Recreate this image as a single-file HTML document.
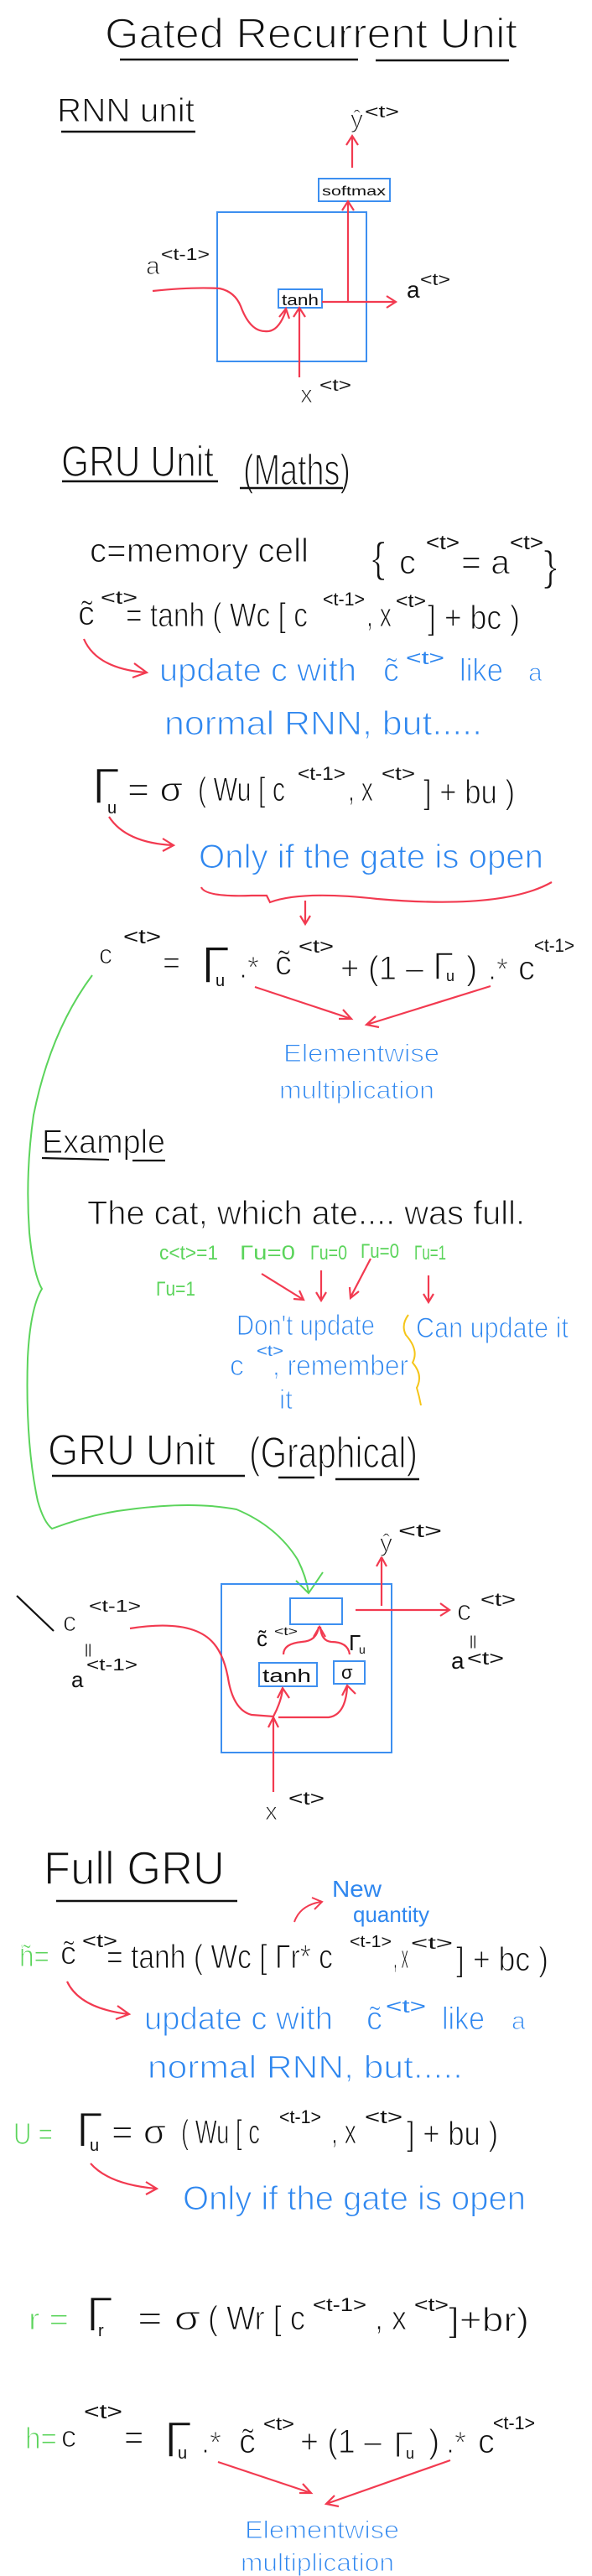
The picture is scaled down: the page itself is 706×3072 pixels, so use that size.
<!DOCTYPE html>
<html><head><meta charset="utf-8">
<style>
html,body{margin:0;padding:0;background:#fff;}
svg{display:block;}
text{font-family:"Liberation Sans",sans-serif;}
text[font-size="30"],text[font-size="32"],text[font-size="34"],text[font-size="36"],text[font-size="38"],text[font-size="40"]{stroke:#fff;stroke-width:1.1px;}
text[font-size="44"],text[font-size="46"],text[font-size="50"],text[font-size="52"],text[font-size="56"],text[font-size="58"],text[font-size="60"],text[font-size="62"]{stroke:#fff;stroke-width:1.6px;}
.k{fill:#111;}
.b{fill:#2f87ef;}
.g{fill:#5bd45b;}
</style></head>
<body>
<svg width="706" height="3072" viewBox="0 0 706 3072" xmlns="http://www.w3.org/2000/svg">
<rect width="706" height="3072" fill="#fff"/>

<text class="k" x="125" y="57" font-size="50" textLength="492" lengthAdjust="spacingAndGlyphs">Gated Recurrent Unit</text>
<g stroke="#111" stroke-width="2.5">
<line x1="143" y1="71" x2="427" y2="71"/><line x1="448" y1="72" x2="607" y2="72"/>
</g>

<text class="k" x="68" y="145" font-size="40" textLength="164" lengthAdjust="spacingAndGlyphs">RNN unit</text>
<line x1="73" y1="157" x2="233" y2="157" stroke="#111" stroke-width="2.5"/>

<g fill="none" stroke="#3d8ff0" stroke-width="2">
<rect x="259" y="253" width="178" height="178"/>
<rect x="380" y="213" width="85" height="27"/>
<rect x="332" y="345" width="52" height="22"/>
</g>
<text class="k" x="384" y="233" font-size="16" textLength="76" lengthAdjust="spacingAndGlyphs">softmax</text>
<text class="k" x="336" y="364" font-size="18" textLength="44" lengthAdjust="spacingAndGlyphs">tanh</text>
<g fill="none" stroke="#f23a50" stroke-width="2.2">
<path d="M182,347 Q230,342 262,344 Q280,348 287,365 Q298,395 316,395 Q332,397 341,370"/>
<path d="M333,378 L341,368 L345,380"/>
<path d="M357,450 L357,368 M350,378 L357,367 L364,378"/>
<path d="M384,360 L471,360 M461,353 L472,360 L461,367"/>
<path d="M415,360 L415,241 M408,251 L415,240 L422,251"/>
<path d="M420,200 L420,163 M413,173 L420,162 L427,173"/>
</g>
<text class="k" x="418" y="152" font-size="30">ŷ</text>
<text class="k" x="435" y="140" font-size="20" textLength="41" lengthAdjust="spacingAndGlyphs">&lt;t&gt;</text>
<text class="k" x="174" y="327" font-size="30">a</text>
<text class="k" x="192" y="310" font-size="20" textLength="58" lengthAdjust="spacingAndGlyphs">&lt;t-1&gt;</text>
<text class="k" x="485" y="355" font-size="28">a</text>
<text class="k" x="501" y="340" font-size="20" textLength="36" lengthAdjust="spacingAndGlyphs">&lt;t&gt;</text>
<text class="k" x="358" y="480" font-size="30">x</text>
<text class="k" x="381" y="466" font-size="20" textLength="38" lengthAdjust="spacingAndGlyphs">&lt;t&gt;</text>

<text class="k" x="73" y="568" font-size="52" textLength="182" lengthAdjust="spacingAndGlyphs">GRU Unit</text>
<text class="k" x="290" y="578" font-size="52" textLength="128" lengthAdjust="spacingAndGlyphs">(Maths)</text>
<g stroke="#111" stroke-width="2.5">
<line x1="74" y1="574" x2="260" y2="574"/><line x1="286" y1="582" x2="409" y2="582"/>
</g>

<text class="k" x="107" y="670" font-size="40" textLength="261" lengthAdjust="spacingAndGlyphs">c=memory cell</text>
<text class="k" x="443" y="682" font-size="50">{</text>
<text class="k" x="476" y="684" font-size="40">c</text>
<text class="k" x="508" y="655" font-size="24" textLength="40" lengthAdjust="spacingAndGlyphs">&lt;t&gt;</text>
<text class="k" x="550" y="684" font-size="40" textLength="58" lengthAdjust="spacingAndGlyphs">= a</text>
<text class="k" x="608" y="655" font-size="24" textLength="40" lengthAdjust="spacingAndGlyphs">&lt;t&gt;</text>
<text class="k" x="648" y="692" font-size="50">}</text>

<text class="k" x="93" y="745" font-size="40">c̃</text>
<text class="k" x="120" y="720" font-size="22" textLength="44" lengthAdjust="spacingAndGlyphs">&lt;t&gt;</text>
<text class="k" x="150" y="747" font-size="40" textLength="217" lengthAdjust="spacingAndGlyphs">= tanh ( Wc [ c</text>
<text class="k" x="385" y="722" font-size="22" textLength="50" lengthAdjust="spacingAndGlyphs">&lt;t-1&gt;</text>
<text class="k" x="437" y="747" font-size="40" textLength="30" lengthAdjust="spacingAndGlyphs">, x</text>
<text class="k" x="472" y="724" font-size="22" textLength="36" lengthAdjust="spacingAndGlyphs">&lt;t&gt;</text>
<text class="k" x="510" y="750" font-size="40" textLength="110" lengthAdjust="spacingAndGlyphs">] + bc )</text>

<g fill="none" stroke="#f23a50" stroke-width="2.2">
<path d="M100,762 Q115,797 173,802 M160,791 L175,802 L158,808"/>
</g>
<text class="b" x="190" y="812" font-size="38" textLength="235" lengthAdjust="spacingAndGlyphs">update c with</text>
<text class="b" x="457" y="812" font-size="38">c̃</text>
<text class="b" x="484" y="792" font-size="22" textLength="46" lengthAdjust="spacingAndGlyphs">&lt;t&gt;</text>
<text class="b" x="548" y="812" font-size="38" textLength="52" lengthAdjust="spacingAndGlyphs">like</text>
<text class="b" x="630" y="812" font-size="30">a</text>
<text class="b" x="196" y="876" font-size="40" textLength="379" lengthAdjust="spacingAndGlyphs">normal RNN, but.....</text>

<text class="k" x="110" y="958" font-size="60">Γ</text>
<text class="k" x="128" y="970" font-size="20">u</text>
<text class="k" x="152" y="955" font-size="40" textLength="66" lengthAdjust="spacingAndGlyphs">= σ</text>
<text class="k" x="236" y="955" font-size="40" textLength="104" lengthAdjust="spacingAndGlyphs">( Wu [ c</text>
<text class="k" x="355" y="930" font-size="22" textLength="57" lengthAdjust="spacingAndGlyphs">&lt;t-1&gt;</text>
<text class="k" x="415" y="955" font-size="40" textLength="30" lengthAdjust="spacingAndGlyphs">, x</text>
<text class="k" x="455" y="930" font-size="22" textLength="40" lengthAdjust="spacingAndGlyphs">&lt;t&gt;</text>
<text class="k" x="505" y="958" font-size="40" textLength="109" lengthAdjust="spacingAndGlyphs">] + bu )</text>

<g fill="none" stroke="#f23a50" stroke-width="2.2">
<path d="M130,974 Q150,1005 206,1008 M194,1000 L207,1008 L194,1015"/>
<path d="M240,1058 Q245,1070 300,1068 L318,1068 L322,1076 Q360,1062 450,1072 Q600,1085 658,1052"/>
<path d="M364,1074 L364,1101 M358,1092 L364,1102 L370,1092"/>
</g>
<text class="b" x="237" y="1035" font-size="40" textLength="411" lengthAdjust="spacingAndGlyphs">Only if the gate is open</text>

<text class="k" x="118" y="1149" font-size="32">c</text>
<text class="k" x="147" y="1125" font-size="24" textLength="45" lengthAdjust="spacingAndGlyphs">&lt;t&gt;</text>
<text class="k" x="194" y="1160" font-size="36">=</text>
<text class="k" x="240" y="1172" font-size="62">Γ</text>
<text class="k" x="257" y="1176" font-size="20">u</text>
<text class="k" x="285" y="1166" font-size="36">.*</text>
<text class="k" x="328" y="1162" font-size="40">c̃</text>
<text class="k" x="356" y="1136" font-size="22" textLength="42" lengthAdjust="spacingAndGlyphs">&lt;t&gt;</text>
<text class="k" x="406" y="1168" font-size="40" textLength="99" lengthAdjust="spacingAndGlyphs">+ (1 –</text>
<text class="k" x="516" y="1168" font-size="46">Γ</text>
<text class="k" x="532" y="1170" font-size="18">u</text>
<text class="k" x="556" y="1168" font-size="40">)</text>
<text class="k" x="582" y="1168" font-size="36">.*</text>
<text class="k" x="618" y="1168" font-size="40">c</text>
<text class="k" x="637" y="1135" font-size="22" textLength="48" lengthAdjust="spacingAndGlyphs">&lt;t-1&gt;</text>

<g fill="none" stroke="#f23a50" stroke-width="2.2">
<path d="M304,1177 L419,1215 M404,1215 L419,1215 L409,1204"/>
<path d="M585,1176 L437,1222 M448,1212 L437,1222 L452,1225"/>
</g>
<text class="b" x="338" y="1266" font-size="30" textLength="186" lengthAdjust="spacingAndGlyphs">Elementwise</text>
<text class="b" x="333" y="1310" font-size="30" textLength="185" lengthAdjust="spacingAndGlyphs">multiplication</text>

<text class="k" x="50" y="1375" font-size="40" textLength="147" lengthAdjust="spacingAndGlyphs">Example</text>
<g stroke="#111" stroke-width="2.2">
<line x1="50" y1="1381" x2="130" y2="1383"/><line x1="158" y1="1384" x2="197" y2="1384"/>
</g>
<text class="k" x="104" y="1460" font-size="40" textLength="522" lengthAdjust="spacingAndGlyphs">The cat, which ate.... was full.</text>

<text class="g" x="190" y="1502" font-size="24" textLength="70" lengthAdjust="spacingAndGlyphs">c&lt;t&gt;=1</text>
<text class="g" x="286" y="1502" font-size="24" textLength="66" lengthAdjust="spacingAndGlyphs">Γu=0</text>
<text class="g" x="370" y="1502" font-size="24" textLength="44" lengthAdjust="spacingAndGlyphs">Γu=0</text>
<text class="g" x="430" y="1500" font-size="24" textLength="46" lengthAdjust="spacingAndGlyphs">Γu=0</text>
<text class="g" x="494" y="1502" font-size="24" textLength="38" lengthAdjust="spacingAndGlyphs">Γu=1</text>
<text class="g" x="186" y="1545" font-size="24" textLength="47" lengthAdjust="spacingAndGlyphs">Γu=1</text>

<g fill="none" stroke="#f23a50" stroke-width="2.2">
<path d="M312,1519 L362,1550 M350,1549 L362,1550 L357,1539"/>
<path d="M383,1515 L383,1550 M377,1541 L383,1551 L389,1541"/>
<path d="M442,1501 L418,1547 M417,1535 L418,1548 L428,1540"/>
<path d="M511,1521 L511,1552 M505,1543 L511,1553 L517,1543"/>
</g>
<text class="b" x="282" y="1592" font-size="34" textLength="165" lengthAdjust="spacingAndGlyphs">Don't update</text>
<text class="b" x="274" y="1640" font-size="34">c</text>
<text class="b" x="306" y="1617" font-size="18" textLength="32" lengthAdjust="spacingAndGlyphs">&lt;t&gt;</text>
<text class="b" x="325" y="1640" font-size="34" textLength="162" lengthAdjust="spacingAndGlyphs">, remember</text>
<text class="b" x="333" y="1680" font-size="32">it</text>
<text class="b" x="496" y="1595" font-size="34" textLength="182" lengthAdjust="spacingAndGlyphs">Can update it</text>
<path d="M487,1568 Q478,1580 484,1592 Q500,1610 492,1625 Q505,1640 497,1655 Q500,1665 502,1676" fill="none" stroke="#f5c518" stroke-width="2"/>

<text class="k" x="57" y="1747" font-size="52" textLength="200" lengthAdjust="spacingAndGlyphs">GRU Unit</text>
<text class="k" x="297" y="1750" font-size="52" textLength="201" lengthAdjust="spacingAndGlyphs">(Graphical)</text>
<g stroke="#111" stroke-width="2.5">
<line x1="62" y1="1760" x2="292" y2="1760"/><line x1="332" y1="1762" x2="375" y2="1762"/><line x1="400" y1="1764" x2="500" y2="1764"/>
</g>

<path d="M110,1163 Q60,1230 40,1330 Q30,1400 35,1470 Q40,1520 50,1537 Q36,1560 33,1620 Q30,1720 45,1790 Q52,1815 62,1823 Q110,1805 155,1800 Q230,1790 282,1800 Q330,1820 355,1860 Q365,1880 368,1899 M353,1885 L368,1900 L385,1875" fill="none" stroke="#5bd45b" stroke-width="2"/>

<g fill="none" stroke="#3d8ff0" stroke-width="2">
<rect x="264" y="1889" width="203" height="201"/>
<rect x="346" y="1906" width="62" height="31"/>
<rect x="309" y="1983" width="69" height="28"/>
<rect x="398" y="1981" width="37" height="27"/>
</g>
<text class="k" x="313" y="2006" font-size="22" textLength="58" lengthAdjust="spacingAndGlyphs">tanh</text>
<text class="k" x="407" y="2002" font-size="22">σ</text>
<g fill="none" stroke="#f23a50" stroke-width="2.2">
<path d="M155,1942 Q230,1930 255,1960 Q268,1975 273,2007 Q280,2040 300,2045 L326,2047 Q335,2030 337,2015 M331,2025 L337,2013 L345,2025"/>
<path d="M332,2048 L392,2048 Q412,2045 414,2012 M408,2022 L414,2010 L424,2020"/>
<path d="M326,2137 L326,2050 M320,2060 L326,2048 L332,2060"/>
<path d="M338,1973 Q338,1960 360,1958 Q378,1957 380,1940 M417,1973 Q415,1958 395,1958 Q383,1957 382,1940 M374,1952 L381,1940 L388,1952"/>
<path d="M424,1920 L535,1920 M525,1912 L536,1920 L525,1927"/>
<path d="M455,1915 L455,1858 M449,1868 L455,1857 L461,1868"/>
</g>
<line x1="20" y1="1903" x2="64" y2="1945" stroke="#111" stroke-width="2.2"/>
<text class="k" x="453" y="1850" font-size="30">ŷ</text>
<text class="k" x="475" y="1833" font-size="22" textLength="52" lengthAdjust="spacingAndGlyphs">&lt;t&gt;</text>
<text class="k" x="545" y="1932" font-size="34">c</text>
<text class="k" x="573" y="1915" font-size="22" textLength="42" lengthAdjust="spacingAndGlyphs">&lt;t&gt;</text>
<text class="k" x="560" y="1962" font-size="16">||</text>
<text class="k" x="538" y="1990" font-size="28">a</text>
<text class="k" x="557" y="1985" font-size="22" textLength="44" lengthAdjust="spacingAndGlyphs">&lt;t&gt;</text>
<text class="k" x="75" y="1945" font-size="32">c</text>
<text class="k" x="106" y="1922" font-size="20" textLength="62" lengthAdjust="spacingAndGlyphs">&lt;t-1&gt;</text>
<text class="k" x="101" y="1972" font-size="16">||</text>
<text class="k" x="85" y="2012" font-size="26">a</text>
<text class="k" x="103" y="1992" font-size="20" textLength="61" lengthAdjust="spacingAndGlyphs">&lt;t-1&gt;</text>
<text class="k" x="306" y="1963" font-size="26">c̃</text>
<text class="k" x="327" y="1950" font-size="14" textLength="28" lengthAdjust="spacingAndGlyphs">&lt;t&gt;</text>
<text class="k" x="416" y="1968" font-size="26">Γ</text>
<text class="k" x="428" y="1972" font-size="14">u</text>
<text class="k" x="316" y="2170" font-size="30">x</text>
<text class="k" x="344" y="2152" font-size="22" textLength="43" lengthAdjust="spacingAndGlyphs">&lt;t&gt;</text>

<text class="k" x="52" y="2247" font-size="56" textLength="216" lengthAdjust="spacingAndGlyphs">Full GRU</text>
<line x1="67" y1="2267" x2="283" y2="2267" stroke="#111" stroke-width="2.5"/>
<text class="b" x="396" y="2262" font-size="28" textLength="59" lengthAdjust="spacingAndGlyphs">New</text>
<text class="b" x="421" y="2292" font-size="26" textLength="91" lengthAdjust="spacingAndGlyphs">quantity</text>
<path d="M351,2292 Q358,2272 383,2268 M372,2263 L384,2268 L375,2277" fill="none" stroke="#f23a50" stroke-width="2"/>

<text class="g" x="23" y="2345" font-size="36" textLength="36" lengthAdjust="spacingAndGlyphs">h̃=</text>
<text class="k" x="72" y="2342" font-size="38">c̃</text>
<text class="k" x="98" y="2322" font-size="22" textLength="42" lengthAdjust="spacingAndGlyphs">&lt;t&gt;</text>
<text class="k" x="127" y="2347" font-size="40" textLength="270" lengthAdjust="spacingAndGlyphs">= tanh ( Wc [ Γr* c</text>
<text class="k" x="417" y="2322" font-size="20" textLength="50" lengthAdjust="spacingAndGlyphs">&lt;t-1&gt;</text>
<text class="k" x="469" y="2347" font-size="40" textLength="18" lengthAdjust="spacingAndGlyphs">, x</text>
<text class="k" x="490" y="2324" font-size="20" textLength="50" lengthAdjust="spacingAndGlyphs">&lt;t&gt;</text>
<text class="k" x="544" y="2350" font-size="40" textLength="110" lengthAdjust="spacingAndGlyphs">] + bc )</text>

<g fill="none" stroke="#f23a50" stroke-width="2.2">
<path d="M80,2363 Q95,2395 153,2402 M140,2392 L154,2402 L138,2408"/>
</g>
<text class="b" x="172" y="2420" font-size="38" textLength="225" lengthAdjust="spacingAndGlyphs">update c with</text>
<text class="b" x="437" y="2420" font-size="38">c̃</text>
<text class="b" x="460" y="2400" font-size="22" textLength="48" lengthAdjust="spacingAndGlyphs">&lt;t&gt;</text>
<text class="b" x="527" y="2420" font-size="38" textLength="51" lengthAdjust="spacingAndGlyphs">like</text>
<text class="b" x="610" y="2420" font-size="30">a</text>
<text class="b" x="176" y="2478" font-size="38" textLength="376" lengthAdjust="spacingAndGlyphs">normal RNN, but.....</text>

<text class="g" x="16" y="2557" font-size="36" textLength="47" lengthAdjust="spacingAndGlyphs">U =</text>
<text class="k" x="91" y="2560" font-size="58">Γ</text>
<text class="k" x="107" y="2565" font-size="20">u</text>
<text class="k" x="133" y="2556" font-size="40" textLength="65" lengthAdjust="spacingAndGlyphs">= σ</text>
<text class="k" x="216" y="2556" font-size="40" textLength="94" lengthAdjust="spacingAndGlyphs">( Wu [ c</text>
<text class="k" x="333" y="2532" font-size="22" textLength="50" lengthAdjust="spacingAndGlyphs">&lt;t-1&gt;</text>
<text class="k" x="395" y="2556" font-size="40" textLength="30" lengthAdjust="spacingAndGlyphs">, x</text>
<text class="k" x="435" y="2532" font-size="22" textLength="45" lengthAdjust="spacingAndGlyphs">&lt;t&gt;</text>
<text class="k" x="485" y="2558" font-size="40" textLength="109" lengthAdjust="spacingAndGlyphs">] + bu )</text>
<path d="M108,2580 Q130,2605 186,2610 M174,2602 L187,2610 L174,2617" fill="none" stroke="#f23a50" stroke-width="2.2"/>
<text class="b" x="218" y="2635" font-size="40" textLength="409" lengthAdjust="spacingAndGlyphs">Only if the gate is open</text>

<text class="g" x="34" y="2778" font-size="36" textLength="48" lengthAdjust="spacingAndGlyphs">r =</text>
<text class="k" x="103" y="2780" font-size="58">Γ</text>
<text class="k" x="117" y="2786" font-size="20">r</text>
<text class="k" x="164" y="2778" font-size="40" textLength="75" lengthAdjust="spacingAndGlyphs">= σ</text>
<text class="k" x="248" y="2778" font-size="40" textLength="116" lengthAdjust="spacingAndGlyphs">( Wr [ c</text>
<text class="k" x="373" y="2756" font-size="22" textLength="64" lengthAdjust="spacingAndGlyphs">&lt;t-1&gt;</text>
<text class="k" x="447" y="2778" font-size="40" textLength="38" lengthAdjust="spacingAndGlyphs">, x</text>
<text class="k" x="494" y="2756" font-size="22" textLength="41" lengthAdjust="spacingAndGlyphs">&lt;t&gt;</text>
<text class="k" x="535" y="2780" font-size="40" textLength="96" lengthAdjust="spacingAndGlyphs">]+br)</text>

<text class="g" x="30" y="2920" font-size="36" textLength="38" lengthAdjust="spacingAndGlyphs">h=</text>
<text class="k" x="73" y="2918" font-size="36">c</text>
<text class="k" x="100" y="2884" font-size="24" textLength="46" lengthAdjust="spacingAndGlyphs">&lt;t&gt;</text>
<text class="k" x="148" y="2920" font-size="40">=</text>
<text class="k" x="196" y="2930" font-size="60">Γ</text>
<text class="k" x="212" y="2932" font-size="20">u</text>
<text class="k" x="240" y="2925" font-size="36">.*</text>
<text class="k" x="285" y="2925" font-size="40">c̃</text>
<text class="k" x="314" y="2898" font-size="22" textLength="37" lengthAdjust="spacingAndGlyphs">&lt;t&gt;</text>
<text class="k" x="358" y="2925" font-size="40" textLength="97" lengthAdjust="spacingAndGlyphs">+ (1 –</text>
<text class="k" x="469" y="2930" font-size="44">Γ</text>
<text class="k" x="484" y="2932" font-size="18">u</text>
<text class="k" x="511" y="2925" font-size="40">)</text>
<text class="k" x="532" y="2925" font-size="36">.*</text>
<text class="k" x="570" y="2925" font-size="40">c</text>
<text class="k" x="588" y="2897" font-size="22" textLength="50" lengthAdjust="spacingAndGlyphs">&lt;t-1&gt;</text>

<g fill="none" stroke="#f23a50" stroke-width="2.2">
<path d="M260,2936 L371,2973 M357,2973 L371,2973 L361,2962"/>
<path d="M537,2934 L389,2986 M399,2976 L389,2986 L404,2989"/>
</g>
<text class="b" x="292" y="3027" font-size="30" textLength="184" lengthAdjust="spacingAndGlyphs">Elementwise</text>
<text class="b" x="287" y="3066" font-size="30" textLength="183" lengthAdjust="spacingAndGlyphs">multiplication</text>
</svg>
</body></html>
